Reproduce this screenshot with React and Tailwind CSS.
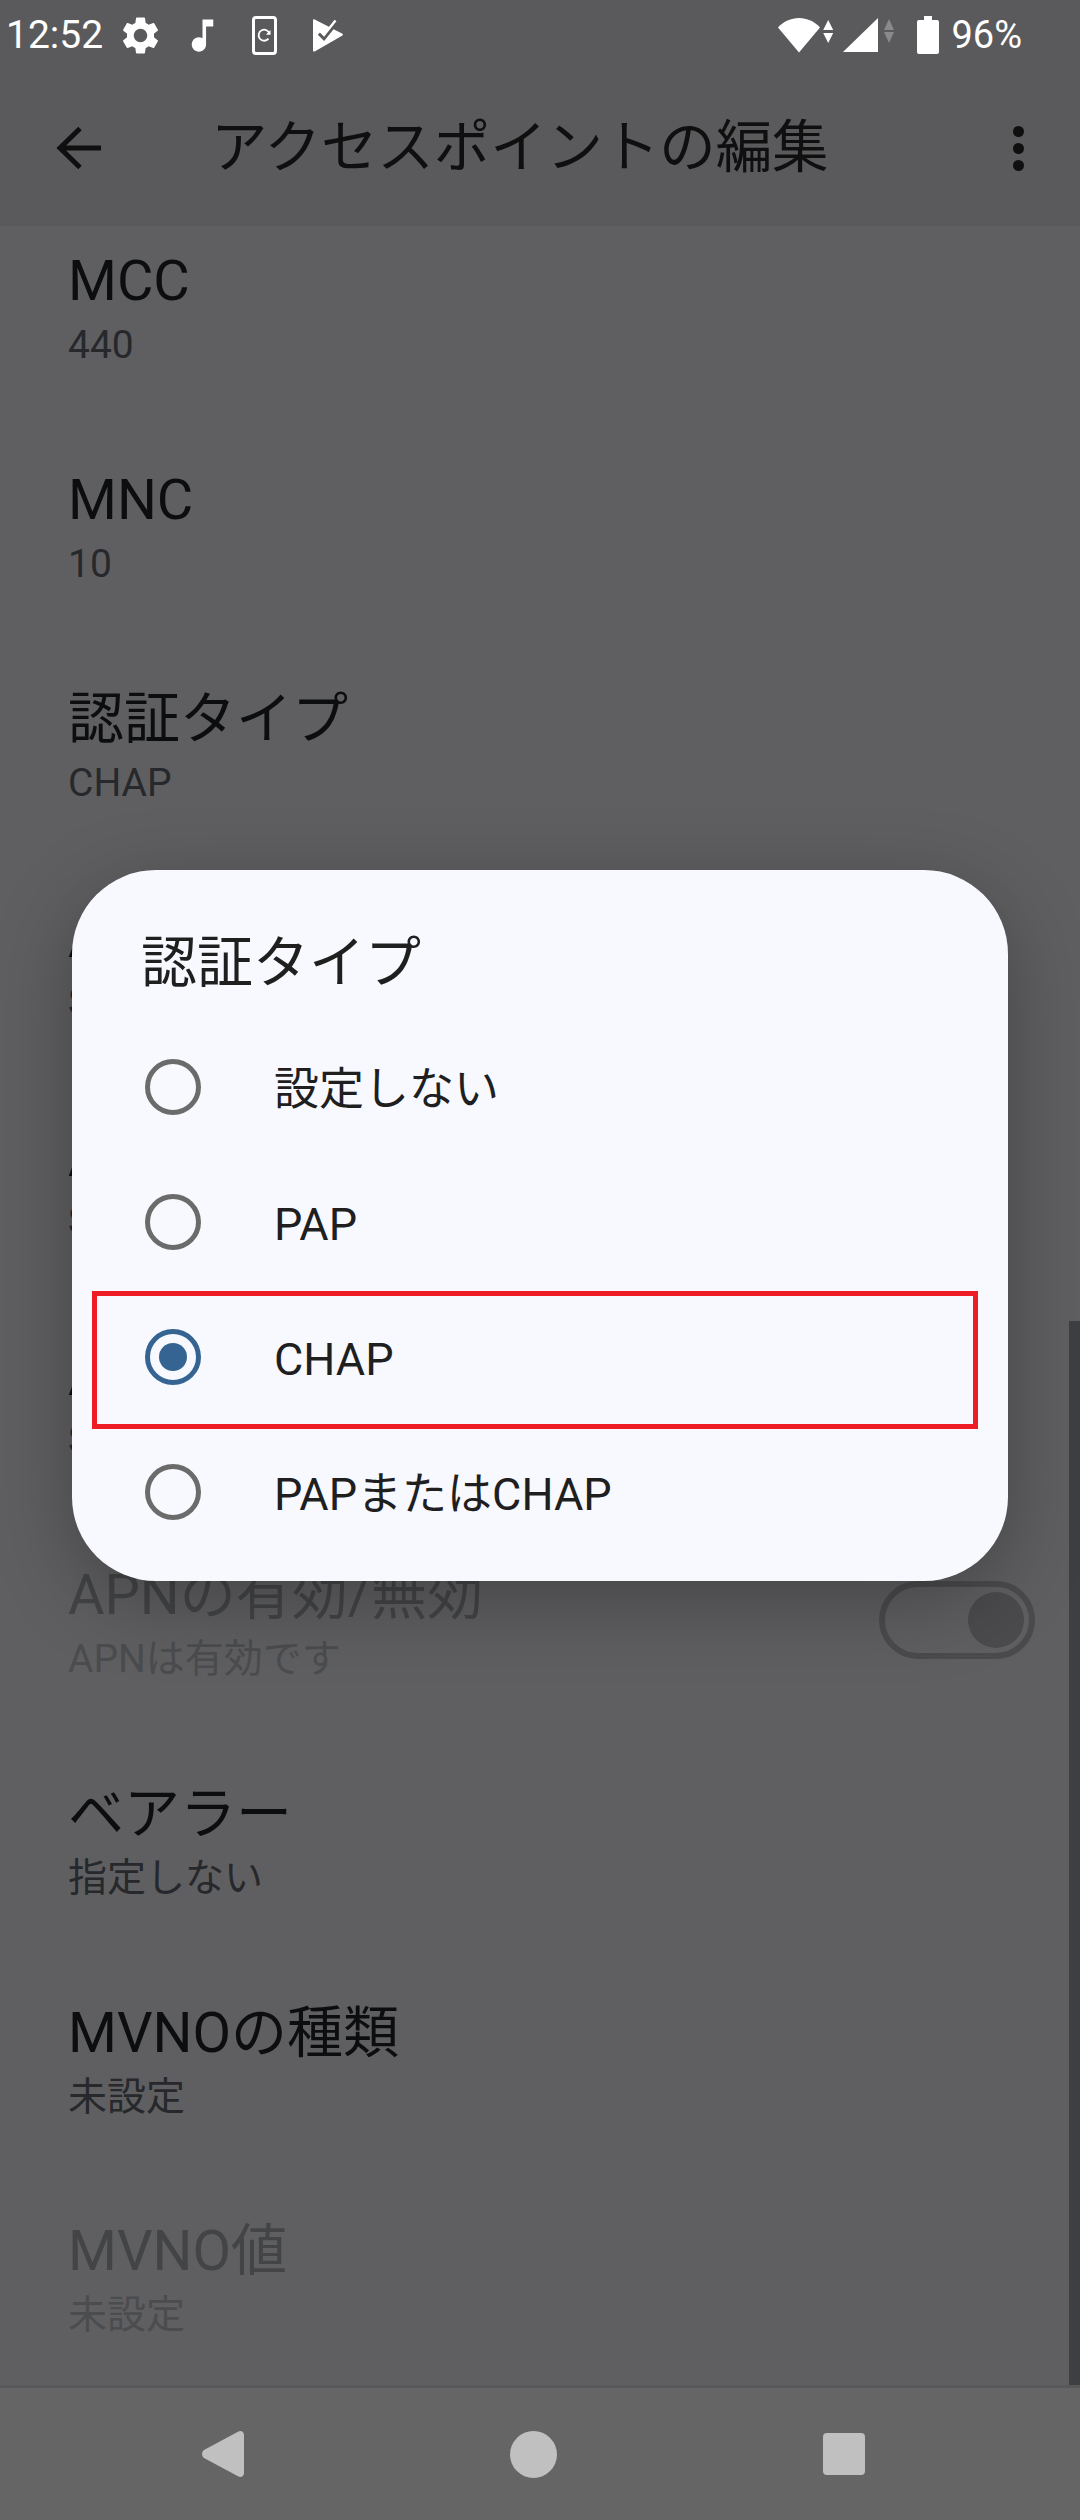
import React from 'react'

const rows = [
  { title: 'MCC', value: '440' },
  { title: 'MNC', value: '10' },
  { title: '認証タイプ', value: 'CHAP' },
  { title: 'APNタイプ', value: 'SUPL' },
  { title: 'APNプロトコル', value: 'SIP' },
  { title: 'APNローミングプロトコル', value: 'SIP' },
  { title: 'APNの有効/無効', value: 'APNは有効です', disabled: true, toggle: true },
  { title: 'ベアラー', value: '指定しない' },
  { title: 'MVNOの種類', value: '未設定' },
  { title: 'MVNO値', value: '未設定', disabled: true },
]

const options = [
  { label: '設定しない' },
  { label: 'PAP' },
  { label: 'CHAP', checked: true },
  { label: 'PAPまたはCHAP' },
]

const Toggle = () => (
  <div className="flex h-[78px] w-[156px] shrink-0 items-center justify-end rounded-full border-[6px] border-[#4b4b4d] pr-[5px]">
    <div className="h-14 w-14 rounded-full bg-[#4b4b4d]" />
  </div>
)

const Row = ({ title, value, disabled, toggle }) => (
  <div className="flex h-[218.9px] items-center justify-between pr-[45px] pl-[68px]">
    <div>
      <div className={`text-[56px] leading-[78px] ${disabled ? 'text-[#434446]' : 'text-[#0c0d0f]'}`}>{title}</div>
      <div className={`text-[39px] leading-[50px] ${disabled ? 'text-[#4b4c4e]' : 'text-[#26282b]'}`}>{value}</div>
    </div>
    {toggle && <Toggle />}
  </div>
)

const Radio = ({ checked }) => (
  <div className={`flex h-14 w-14 shrink-0 items-center justify-center rounded-full border-[5px] ${checked ? 'border-[#356492]' : 'border-[#6b6b6b]'}`}>
    {checked && <div className="h-7 w-7 rounded-full bg-[#356492]" />}
  </div>
)

const StatusBar = () => (
  <div className="flex h-[70px] items-center pr-[58px] pl-[6px] text-[39px] leading-none text-white">
    <span className="w-[98px]">12:52</span>
    <svg className="ml-[14px]" width="45" height="45" viewBox="0 0 24 24" fill="#fff">
      <path d="M19.14 12.94c.04-.3.06-.61.06-.94 0-.32-.02-.64-.07-.94l2.03-1.58c.18-.14.23-.41.12-.61l-1.92-3.32c-.12-.22-.37-.29-.59-.22l-2.39.96c-.5-.38-1.03-.7-1.62-.94l-.36-2.54c-.04-.24-.24-.41-.48-.41h-3.84c-.24 0-.43.17-.47.41l-.36 2.54c-.59.24-1.13.57-1.62.94l-2.39-.96c-.22-.08-.47 0-.59.22L2.74 8.87c-.12.21-.08.47.12.61l2.03 1.58c-.05.3-.09.63-.09.94s.02.64.07.94l-2.03 1.58c-.18.14-.23.41-.12.61l1.92 3.32c.12.22.37.29.59.22l2.39-.96c.5.38 1.03.7 1.62.94l.36 2.54c.05.24.24.41.48.41h3.84c.24 0 .44-.17.47-.41l.36-2.54c.59-.24 1.13-.56 1.62-.94l2.39.96c.22.08.47 0 .59-.22l1.92-3.32c.12-.22.07-.47-.12-.61l-2.01-1.58zM12 15.6c-1.98 0-3.6-1.62-3.6-3.6s1.62-3.6 3.6-3.6 3.6 1.62 3.6 3.6-1.62 3.6-3.6 3.6z" />
    </svg>
    <svg className="ml-[18px]" width="43" height="43" viewBox="0 0 24 24" fill="#fff">
      <path d="M12 3v10.55c-.59-.34-1.27-.55-2-.55-2.21 0-4 1.79-4 4s1.79 4 4 4 4-1.79 4-4V7h4V3h-6z" />
    </svg>
    <svg className="ml-[28px]" width="25" height="39" viewBox="0 0 25 39" fill="none" stroke="#fff">
      <rect x="1.5" y="1.5" width="22" height="36" rx="2.5" strokeWidth="3" />
      <path d="M17.5 18a5.5 5.5 0 1 0-1 4.6" strokeWidth="1.8" />
      <path d="M18.5 14v4.8h-4.6z" fill="#fff" stroke="none" />
    </svg>
    <svg className="ml-[35px]" width="31" height="33" viewBox="0 0 31 33">
      <path d="M1 1.5c0-1 .8-1.4 1.7-1L30 14.5c1.2.6 1.2 1.7 0 2.3L2.7 32.4c-.9.5-1.7 0-1.7-1z" fill="#fff" />
      <path d="M7 14.5l5 5 12-15" fill="none" stroke="#5a5a5c" strokeWidth="3.4" />
      <path d="M7.5 12.5l4.5 4.5 11.5-14.5" fill="none" stroke="#fff" strokeWidth="2.4" transform="translate(0 -1)" />
    </svg>
    <svg className="ml-auto" width="56" height="36" viewBox="0 0 56 36">
      <path d="M21 35.5L0 10.5C5.5 4.5 13 1 21 1s15.5 3.5 21 9.5z" fill="#fff" />
      <path d="M50.2 3l5 10h-10zM50.2 26l5-10h-10z" fill="#fff" />
    </svg>
    <svg className="ml-[9px]" width="52" height="36" viewBox="0 0 52 36">
      <path d="M0 35L35 1v34z" fill="#fff" />
      <path d="M46 2l5 11H41zM46 26l5-11H41z" fill="#8a8a8c" />
    </svg>
    <svg className="ml-[22px]" width="22" height="38" viewBox="0 0 22 38" fill="#fff">
      <path d="M7 0h8v4h5c1.2 0 2 .8 2 2v30c0 1.2-.8 2-2 2H2c-1.2 0-2-.8-2-2V6c0-1.2.8-2 2-2h5z" />
    </svg>
    <span className="ml-3 text-[38px]">96%</span>
  </div>
)

const AppBar = () => (
  <div className="flex h-[156px] items-center justify-between pr-[56px] pl-[56px]">
    <div className="flex items-center">
      <svg width="46" height="46" viewBox="0 0 46 46" fill="none" stroke="#0f0f10" strokeWidth="5">
        <path d="M3 23h42M24 3.5L4 23l20 19.5" />
      </svg>
      <span className="ml-[109px] text-[56.4px] leading-none text-[#0f0f10]">アクセスポイントの編集</span>
    </div>
    <div className="flex flex-col gap-[6px]">
      <div className="h-[11px] w-[11px] rounded-full bg-[#0f0f10]" />
      <div className="h-[11px] w-[11px] rounded-full bg-[#0f0f10]" />
      <div className="h-[11px] w-[11px] rounded-full bg-[#0f0f10]" />
    </div>
  </div>
)

const NavBar = () => (
  <div className="flex h-[135px] items-center justify-between border-t-[3px] border-[#58585a] bg-[#656565] pr-[215px] pl-[202px]">
    <svg width="42" height="46" viewBox="0 0 42 46" fill="#c0c0c0">
      <path d="M36 .8c2.6-1.8 6 0 6 3v38.4c0 3-3.4 4.8-6 3L2 27c-2.6-2-2.6-6 0-8z" />
    </svg>
    <div className="h-[47px] w-[47px] rounded-full bg-[#c0c0c0]" />
    <div className="h-[42px] w-[42px] rounded-[4px] bg-[#c0c0c0]" />
  </div>
)

const App = () => {
  return (
    <div lang="ja" className="relative flex h-[2520px] w-[1080px] flex-col overflow-hidden bg-[#5f5f61] font-['Roboto','Noto_Sans_CJK_JP',sans-serif]">
      <div className="bg-[#5a5a5c]">
        <StatusBar />
        <AppBar />
      </div>

      <div className="relative min-h-0 flex-1 overflow-hidden">
        <div className="-mt-[29px]">
          {rows.map((row) => (
            <Row key={row.title} {...row} />
          ))}
        </div>
        <div className="absolute top-[1095px] right-0 bottom-0 w-[11px] bg-[#3e3f42]" />
      </div>

      <NavBar />

      <div className="absolute top-[870px] left-[72px] w-[936px] rounded-[84px] bg-[#f8f9ff] pb-[22px] shadow-[0_20px_80px_rgba(0,0,0,0.28)]">
        <div className="pt-[57px] pb-5 pl-[69px] text-[56px] leading-[72px] text-[#1f1f1f]">認証タイプ</div>
        {options.map((opt) => (
          <div key={opt.label} className="flex h-[135px] items-center gap-[73px] pl-[73px] text-[45px] leading-none text-[#1f1f1f]">
            <Radio checked={opt.checked} />
            <span className="pt-[6px]">{opt.label}</span>
          </div>
        ))}
        <div className="absolute top-[421px] left-5 h-[138px] w-[886px] border-[5px] border-[#ee1c25]" />
      </div>
    </div>
  )
}

export default App
